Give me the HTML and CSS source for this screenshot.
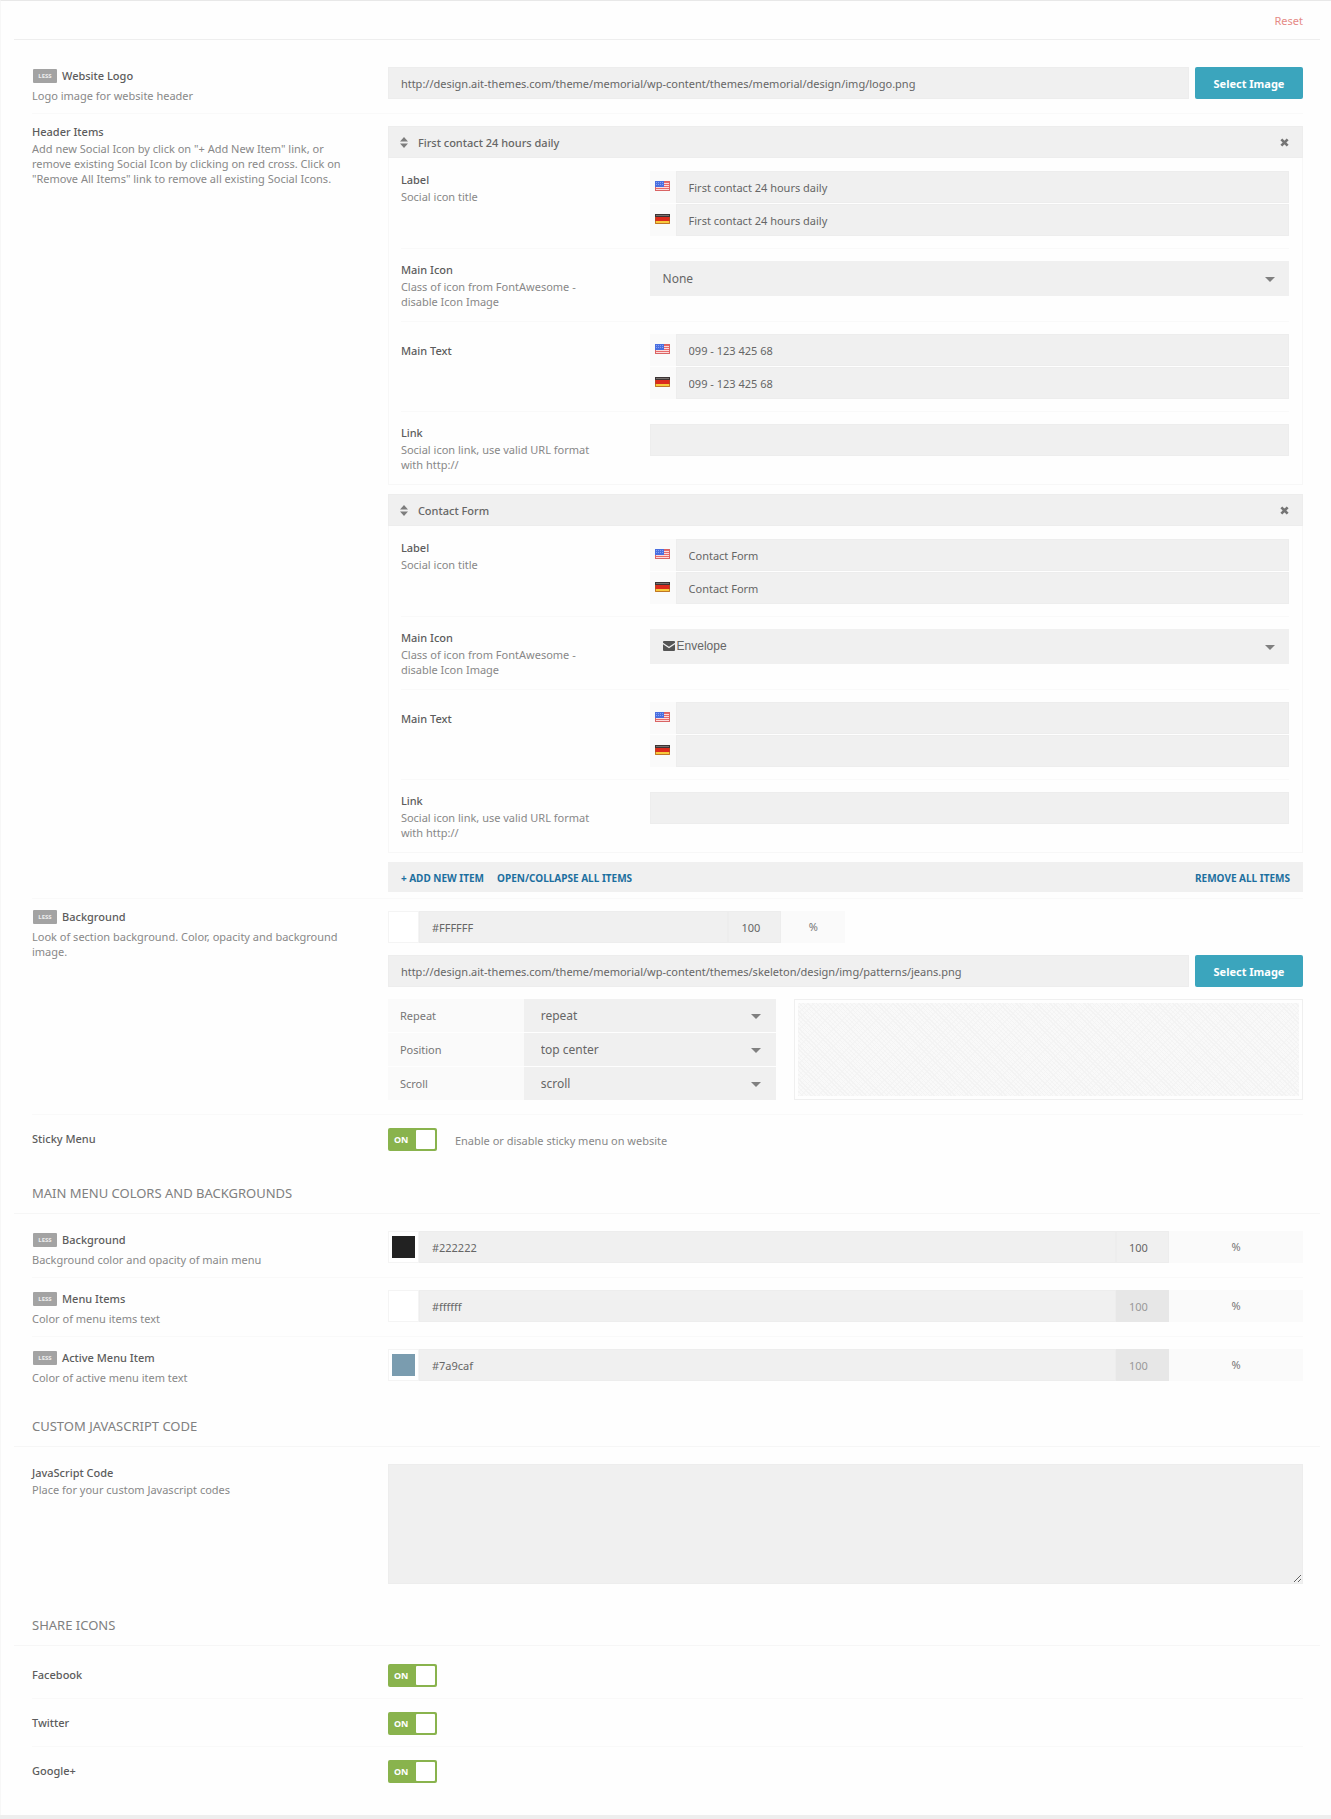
FILE: index.html
```html
<!DOCTYPE html>
<html lang="en">
<head>
    <meta charset="UTF-8">
    <meta name="viewport" content="width=device-width, initial-scale=1.0">
    <title>Header Options</title>
    <link rel="stylesheet" href="styles.css">
</head>
<body>
    <!-- Shared icons -->
    <svg class="sprite" aria-hidden="true">
        <symbol id="flag-us" viewBox="0 0 15 10">
            <rect width="15" height="10" fill="#e86a6a"/>
            <path d="M1 2.5h13M1 4.5h13M1 6.5h13M1 8.5h13" stroke="#fbdcdc" stroke-width="1"/>
            <rect width="9" height="6" fill="#4a6fe0"/>
            <path d="M1 1.5h7M1 3.5h7" stroke="#86a2f2" stroke-dasharray="1 1"/>
            <path d="M.5 6V9.5h14V.5H9" fill="none" stroke="#d96464"/>
        </symbol>
        <symbol id="flag-de" viewBox="0 0 15 10">
            <rect width="15" height="4" fill="#3c3434"/>
            <rect y="3" width="15" height="4" fill="#dc2a1c"/>
            <rect y="7" width="15" height="3" fill="#f8c93c"/>
            <path d="M1 1.5h13" stroke="#77706e"/>
            <path d="M.5 3v6.500h14V3" fill="none" stroke="#a8521c" stroke-opacity=".7"/>
        </symbol>
        <symbol id="sort" viewBox="0 0 8 11">
            <path d="M4 0l4 4.600H0zM4 11L0 6.400h8z" fill="#7d7d7d"/>
        </symbol>
        <symbol id="cross" viewBox="0 0 10 10">
            <path d="M1.500 1.500l7 7M8.500 1.500l-7 7" stroke="#757575" stroke-width="3"/>
        </symbol>
        <symbol id="envelope" viewBox="0 0 12 10">
            <path d="M0 1a1 1 0 0 1 1-1h10a1 1 0 0 1 1 1v.8L6 5.800 0 1.800zM0 3.200l6 4 6-4V9a1 1 0 0 1-1 1H1a1 1 0 0 1-1-1z" fill="#555"/>
        </symbol>
    </svg>

    <form class="options">
        <div class="toolbar">
            <a class="reset" href="#">Reset</a>
        </div>

        <!-- Header -->
        <section class="section">
            <div class="row">
                <div class="info">
                    <label class="title" for="logo"><span class="less">LESS</span>Website Logo</label>
                    <p class="help">Logo image for website header</p>
                </div>
                <div class="control image-picker">
                    <input type="text" id="logo" class="field" value="http://design.ait-themes.com/theme/memorial/wp-content/themes/memorial/design/img/logo.png">
                    <button type="button" class="btn">Select Image</button>
                </div>
            </div>

            <div class="row row-items">
                <div class="info">
                    <div class="title">Header Items</div>
                    <p class="help">Add new Social Icon by click on "+ Add New Item" link, or remove existing Social Icon by clicking on red cross. Click on "Remove All Items" link to remove all existing Social Icons.</p>
                </div>
                <div class="control items">
                    <div class="item">
                        <div class="item-head">
                            <svg class="icon-sort" aria-hidden="true"><use href="#sort"/></svg>
                            <span class="item-name">First contact 24 hours daily</span>
                            <button type="button" class="item-remove" aria-label="Remove item"><svg><use href="#cross"/></svg></button>
                        </div>
                        <div class="item-body">
                            <div class="row">
                                <div class="info">
                                    <label class="title" for="label1-en">Label</label>
                                    <p class="help">Social icon title</p>
                                </div>
                                <div class="control langs">
                                    <div class="lang"><span class="flag"><svg><use href="#flag-us"/></svg></span><input type="text" id="label1-en" class="field" value="First contact 24 hours daily"></div>
                                    <div class="lang"><span class="flag"><svg><use href="#flag-de"/></svg></span><input type="text" class="field" aria-label="Label (German)" value="First contact 24 hours daily"></div>
                                </div>
                            </div>
                            <div class="row">
                                <div class="info">
                                    <label class="title" for="icon1">Main Icon</label>
                                    <p class="help">Class of icon from FontAwesome - disable Icon Image</p>
                                </div>
                                <div class="control">
                                    <div class="select select-icon">
                                        <select id="icon1"><option>None</option></select>
                                    </div>
                                </div>
                            </div>
                            <div class="row">
                                <div class="info">
                                    <label class="title title-tall" for="text1-en">Main Text</label>
                                </div>
                                <div class="control langs">
                                    <div class="lang"><span class="flag"><svg><use href="#flag-us"/></svg></span><input type="text" id="text1-en" class="field" value="099 - 123 425 68"></div>
                                    <div class="lang"><span class="flag"><svg><use href="#flag-de"/></svg></span><input type="text" class="field" aria-label="Main Text (German)" value="099 - 123 425 68"></div>
                                </div>
                            </div>
                            <div class="row">
                                <div class="info">
                                    <label class="title" for="link1">Link</label>
                                    <p class="help">Social icon link, use valid URL format with http://</p>
                                </div>
                                <div class="control">
                                    <input type="text" id="link1" class="field">
                                </div>
                            </div>
                        </div>
                    </div>

                    <div class="item">
                        <div class="item-head">
                            <svg class="icon-sort" aria-hidden="true"><use href="#sort"/></svg>
                            <span class="item-name">Contact Form</span>
                            <button type="button" class="item-remove" aria-label="Remove item"><svg><use href="#cross"/></svg></button>
                        </div>
                        <div class="item-body">
                            <div class="row">
                                <div class="info">
                                    <label class="title" for="label2-en">Label</label>
                                    <p class="help">Social icon title</p>
                                </div>
                                <div class="control langs">
                                    <div class="lang"><span class="flag"><svg><use href="#flag-us"/></svg></span><input type="text" id="label2-en" class="field" value="Contact Form"></div>
                                    <div class="lang"><span class="flag"><svg><use href="#flag-de"/></svg></span><input type="text" class="field" aria-label="Label (German)" value="Contact Form"></div>
                                </div>
                            </div>
                            <div class="row">
                                <div class="info">
                                    <label class="title" for="icon2">Main Icon</label>
                                    <p class="help">Class of icon from FontAwesome - disable Icon Image</p>
                                </div>
                                <div class="control">
                                    <div class="select select-icon has-icon">
                                        <svg class="icon-envelope" aria-hidden="true"><use href="#envelope"/></svg>
                                        <select id="icon2"><option>Envelope</option></select>
                                    </div>
                                </div>
                            </div>
                            <div class="row">
                                <div class="info">
                                    <label class="title title-tall" for="text2-en">Main Text</label>
                                </div>
                                <div class="control langs">
                                    <div class="lang"><span class="flag"><svg><use href="#flag-us"/></svg></span><input type="text" id="text2-en" class="field"></div>
                                    <div class="lang"><span class="flag"><svg><use href="#flag-de"/></svg></span><input type="text" class="field" aria-label="Main Text (German)"></div>
                                </div>
                            </div>
                            <div class="row">
                                <div class="info">
                                    <label class="title" for="link2">Link</label>
                                    <p class="help">Social icon link, use valid URL format with http://</p>
                                </div>
                                <div class="control">
                                    <input type="text" id="link2" class="field">
                                </div>
                            </div>
                        </div>
                    </div>

                    <div class="items-foot">
                        <a href="#">+ Add New Item</a>
                        <a href="#">Open/Collapse All Items</a>
                        <a class="remove-all" href="#">Remove All Items</a>
                    </div>
                </div>
            </div>

            <div class="row row-background">
                <div class="info">
                    <label class="title" for="bg-color"><span class="less">LESS</span>Background</label>
                    <p class="help">Look of section background. Color, opacity and background image.</p>
                </div>
                <div class="control background">
                    <div class="color color-half">
                        <input type="color" class="swatch" aria-label="Pick color" value="#ffffff">
                        <input type="text" id="bg-color" class="field" value="#FFFFFF">
                        <input type="text" class="field opacity" aria-label="Opacity" value="100">
                        <span class="unit">%</span>
                    </div>
                    <div class="image-picker">
                        <input type="text" class="field" aria-label="Background image" value="http://design.ait-themes.com/theme/memorial/wp-content/themes/skeleton/design/img/patterns/jeans.png">
                        <button type="button" class="btn">Select Image</button>
                    </div>
                    <div class="background-options">
                        <div class="background-selects">
                            <label for="bg-repeat">Repeat</label>
                            <div class="select"><select id="bg-repeat"><option>repeat</option></select></div>
                            <label for="bg-position">Position</label>
                            <div class="select"><select id="bg-position"><option>top center</option></select></div>
                            <label for="bg-scroll">Scroll</label>
                            <div class="select"><select id="bg-scroll"><option>scroll</option></select></div>
                        </div>
                        <div class="preview"><div class="pattern"></div></div>
                    </div>
                </div>
            </div>

            <div class="row row-switch">
                <div class="info">
                    <label class="title" for="sticky">Sticky Menu</label>
                </div>
                <div class="control">
                    <label class="switch"><input type="checkbox" id="sticky" checked><span class="switch-text">ON</span><span class="knob"></span></label>
                    <span class="help">Enable or disable sticky menu on website</span>
                </div>
            </div>
        </section>

        <!-- Main menu -->
        <h2 class="heading">Main menu colors and backgrounds</h2>
        <section class="section">
            <div class="row">
                <div class="info">
                    <label class="title" for="menu-bg"><span class="less">LESS</span>Background</label>
                    <p class="help">Background color and opacity of main menu</p>
                </div>
                <div class="control color">
                    <input type="color" class="swatch" aria-label="Pick color" value="#222222">
                    <input type="text" id="menu-bg" class="field" value="#222222">
                    <input type="text" class="field opacity" aria-label="Opacity" value="100">
                    <span class="unit">%</span>
                </div>
            </div>
            <div class="row">
                <div class="info">
                    <label class="title" for="menu-items"><span class="less">LESS</span>Menu Items</label>
                    <p class="help">Color of menu items text</p>
                </div>
                <div class="control color">
                    <input type="color" class="swatch" aria-label="Pick color" value="#ffffff">
                    <input type="text" id="menu-items" class="field" value="#ffffff">
                    <input type="text" class="field opacity" aria-label="Opacity" value="100" disabled>
                    <span class="unit">%</span>
                </div>
            </div>
            <div class="row">
                <div class="info">
                    <label class="title" for="menu-active"><span class="less">LESS</span>Active Menu Item</label>
                    <p class="help">Color of active menu item text</p>
                </div>
                <div class="control color">
                    <input type="color" class="swatch" aria-label="Pick color" value="#7a9caf">
                    <input type="text" id="menu-active" class="field" value="#7a9caf">
                    <input type="text" class="field opacity" aria-label="Opacity" value="100" disabled>
                    <span class="unit">%</span>
                </div>
            </div>
        </section>

        <!-- Custom code -->
        <h2 class="heading">Custom JavaScript code</h2>
        <section class="section">
            <div class="row">
                <div class="info">
                    <label class="title" for="js-code">JavaScript Code</label>
                    <p class="help">Place for your custom Javascript codes</p>
                </div>
                <div class="control">
                    <textarea id="js-code" class="field code"></textarea>
                </div>
            </div>
        </section>

        <!-- Share icons -->
        <h2 class="heading">Share icons</h2>
        <section class="section">
            <div class="row row-switch">
                <div class="info"><label class="title" for="facebook">Facebook</label></div>
                <div class="control">
                    <label class="switch"><input type="checkbox" id="facebook" checked><span class="switch-text">ON</span><span class="knob"></span></label>
                </div>
            </div>
            <div class="row row-switch">
                <div class="info"><label class="title" for="twitter">Twitter</label></div>
                <div class="control">
                    <label class="switch"><input type="checkbox" id="twitter" checked><span class="switch-text">ON</span><span class="knob"></span></label>
                </div>
            </div>
            <div class="row row-switch">
                <div class="info"><label class="title" for="google">Google+</label></div>
                <div class="control">
                    <label class="switch"><input type="checkbox" id="google" checked><span class="switch-text">ON</span><span class="knob"></span></label>
                </div>
            </div>
        </section>
    </form>
</body>
</html>
```

FILE: styles.css
```css
* {
    box-sizing: border-box;
}

body {
    margin: 0;
    background-color: #eee;
    color: #666;
    font-family: "Noto Sans", "Open Sans", sans-serif;
    font-size: 11px;
    line-height: 15px;
}

input,
select,
textarea,
button {
    margin: 0;
    font: inherit;
    color: inherit;
}

svg {
    display: block;
}

.sprite {
    display: none;
}

.options {
    padding: 0 11px 0 13px;
    border-top: 1px solid #e8e8e8;
    border-left: 1px solid #f7f7f7;
    background-color: #fefefe;
}

.toolbar {
    padding: 12px 17px 11px;
    border-bottom: 1px solid #eee;
    text-align: right;
}

.reset {
    color: #e58a86;
    text-decoration: none;
}

/* Rows */
.section {
    padding: 5px 17px 20px 18px;
}

.toolbar + .section {
    padding-top: 15px;
}

.row {
    display: flex;
    padding: 12px 0 10px;
    border-bottom: 1px solid #f9f9f9;
}

.row:last-child {
    border-bottom-color: transparent;
}

.info {
    width: 28%;
    flex: none;
    padding-right: 30px;
}

.control {
    flex: 1;
    min-width: 0;
}

.title {
    display: flex;
    align-items: center;
    height: 17px;
    color: #5c5c5c;
    font-weight: 500;
}

.help {
    margin: 1px 0 0;
    color: #888;
}

.less {
    width: 24px;
    height: 14px;
    margin: 0 5px 0 1px;
    border-radius: 1px;
    background-color: #a3a3a3;
    color: #eee;
    font-size: 6px;
    font-weight: bold;
    line-height: 14px;
    text-align: center;
}

.title:has(.less) + .help {
    margin-top: 4px;
}

.heading {
    margin: 0;
    padding: 0 18px 10px;
    border-bottom: 1px solid #f6f6f6;
    color: #808080;
    font-size: 13px;
    font-weight: normal;
    line-height: 20px;
    text-transform: uppercase;
}

/* Fields */
.field {
    display: block;
    width: 100%;
    height: 32px;
    padding: 0 12px;
    border: 1px solid #ededed;
    border-radius: 0;
    background-color: #f0f0f0;
}

.field:disabled {
    border-color: #e7e7e7;
    background-color: #e7e7e7;
    color: #999;
}

.code {
    height: 120px;
    padding: 8px 12px;
    resize: vertical;
}

.image-picker {
    display: flex;
    gap: 6px;
}

.image-picker .field {
    flex: 1;
}

.btn {
    width: 108px;
    height: 32px;
    flex: none;
    padding: 0;
    border: none;
    border-radius: 2px;
    background-color: #3ba5bd;
    color: #fff;
    font-weight: bold;
    cursor: pointer;
}

.select {
    position: relative;
}

.select select {
    display: block;
    width: 100%;
    height: 32px;
    padding: 0 30px 0 17px;
    border: none;
    border-radius: 0;
    background-color: #f0f0f0;
    font-size: 12px;
    appearance: none;
}

.select::after {
    content: "";
    position: absolute;
    top: 50%;
    right: 15px;
    margin-top: -2px;
    border: 5px solid transparent;
    border-top-color: #808080;
    border-bottom: none;
    pointer-events: none;
}

.select-icon select {
    height: 35px;
    padding-left: 13px;
}

.select-icon.has-icon select {
    padding-left: 27px;
    font-family: "Liberation Sans", Arial, sans-serif;
}

.select-icon::after {
    right: 14px;
}

.icon-envelope {
    position: absolute;
    top: 12px;
    left: 13px;
    width: 12px;
    height: 10px;
}

/* Repeatable items */
.row-items {
    padding: 9px 0 6px;
}

.items {
    padding-top: 3px;
}

.item {
    margin-bottom: 9px;
}

.item-head {
    display: flex;
    align-items: center;
    height: 32px;
    padding: 0 13px 0 11px;
    border: 1px solid #ededed;
    background-color: #f0f0f0;
}

.icon-sort {
    width: 8px;
    height: 11px;
}

.item-name {
    flex: 1;
    padding-left: 10px;
    font-weight: 500;
}

.item-remove {
    padding: 0;
    border: none;
    background: none;
    cursor: pointer;
}

.item-remove svg {
    width: 9px;
    height: 9px;
}

.item-body {
    padding: 1px 13px 0 12px;
    border: 1px solid #f7f7f7;
    border-top: none;
}

.item-body .row {
    padding: 12px 0;
}

.item-body .row:last-child {
    padding-bottom: 11px;
}

.item-body .info {
    padding-right: 48px;
}

.title-tall {
    height: 32px;
}

.langs {
    display: grid;
    gap: 1px;
}

.lang {
    display: flex;
}

.flag {
    width: 26px;
    flex: none;
    padding: 10px 0 0 5px;
    background-color: #fafafa;
}

.flag svg {
    width: 15px;
    height: 10px;
}

.items-foot {
    display: flex;
    gap: 13px;
    padding: 9px 13px 6px;
    background-color: #f0f0f0;
    font-size: 10px;
    font-weight: bold;
    text-transform: uppercase;
}

.items-foot a {
    color: #1c6f9f;
    text-decoration: none;
}

.items-foot .remove-all {
    margin-left: auto;
}

/* Color and background */
.color {
    display: flex;
    height: 32px;
}

.color-half {
    width: 50%;
}

.swatch {
    width: 31px;
    height: 32px;
    flex: none;
    padding: 4px 3px;
    border: 1px solid #f4f4f4;
    background-color: #fff;
    cursor: pointer;
}

.swatch::-webkit-color-swatch-wrapper {
    padding: 0;
}

.swatch::-webkit-color-swatch {
    border: none;
    border-radius: 0;
}

.color .opacity {
    width: 53px;
    flex: none;
}

.unit {
    width: 134px;
    flex: none;
    background-color: #fafafa;
    color: #777;
    line-height: 32px;
    text-align: center;
}

.color-half .unit {
    width: 64px;
}

.row-background {
    padding: 9px 0 14px;
}

.background {
    display: grid;
    gap: 12px;
    padding-top: 3px;
}

.background-options {
    display: flex;
    gap: 18px;
}

.background-selects {
    display: grid;
    grid-template-columns: 35% 65%;
    gap: 1px 0;
    width: 388px;
}

.background-selects label {
    padding-left: 12px;
    background-color: #fafafa;
    color: #777;
    line-height: 33px;
}

.background-selects select {
    height: 33px;
}

.preview {
    flex: 1;
    padding: 3px;
    border: 1px solid #efefef;
}

.pattern {
    height: 100%;
    background-color: #f9f9f9;
    background-image:
        repeating-linear-gradient(45deg, #f3f3f3 0 1px, transparent 1px 3px),
        repeating-linear-gradient(-45deg, #f5f5f5 0 1px, transparent 1px 4px);
}

/* Switches */
.row-switch .title {
    height: 22px;
}

.row-switch .control {
    display: flex;
    align-items: center;
    gap: 18px;
    min-height: 25px;
}

.switch {
    position: relative;
    display: flex;
    align-items: center;
    width: 49px;
    height: 23px;
    padding: 2px;
    border-radius: 2px;
    background-color: #89b34d;
    cursor: pointer;
}

.switch input {
    position: absolute;
    inset: 0;
    width: 100%;
    height: 100%;
    opacity: 0;
    cursor: pointer;
}

.switch-text {
    flex: 1;
    padding-left: 4px;
    color: #fff;
    font-size: 9px;
    font-weight: bold;
}

.knob {
    width: 19px;
    height: 19px;
    border-radius: 1px;
    background-color: #fff;
}
```
